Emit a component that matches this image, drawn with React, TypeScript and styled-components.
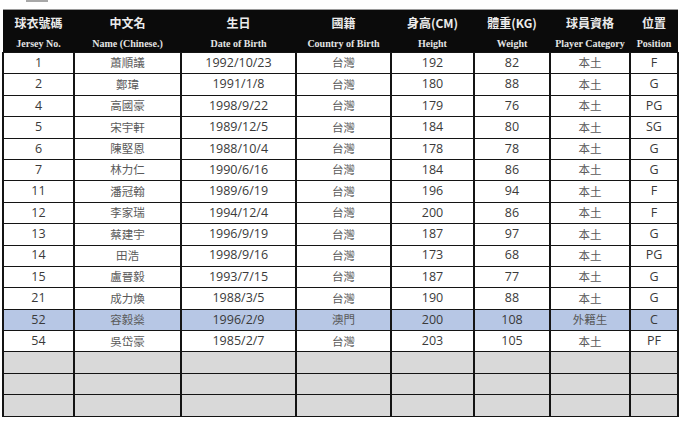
import React from 'react';
import styled, { createGlobalStyle } from 'styled-components';

const GlobalStyle = createGlobalStyle`
  body {
    margin: 0;
    background: #ffffff;
    font-family: "Open Sans", "Noto Sans CJK TC", sans-serif;
  }
`;

const Page = styled.div`
  width: 681px;
  height: 423px;
  overflow: hidden;
  background: #fff;
`;

const TopStrip = styled.div`
  height: 9px;
  padding-left: 26px;
`;

const Mark = styled.div`
  width: 22px;
  height: 2px;
  background: #a8a8a8;
`;

const Table = styled.table`
  margin-left: 2px;
  width: 675px;
  border-collapse: collapse;
  table-layout: fixed;
  border-top: 1px solid #9a9a9a;
`;

const HeadRow = styled.tr<{ $tall?: boolean }>`
  background: #0b0b0b;
  height: ${({ $tall }) => ($tall ? '25px' : '18px')};
`;

const HeadCn = styled.th`
  color: #ececec;
  font-family: "Noto Sans CJK TC", sans-serif;
  font-size: 12px;
  font-weight: 700;
  padding: 0;
  text-align: center;
`;

const HeadEn = styled.th`
  color: #e4e4e4;
  font-family: "Liberation Serif", "Times New Roman", serif;
  font-size: 10px;
  font-weight: 700;
  padding: 0;
  text-align: center;
  white-space: nowrap;
`;

const Row = styled.tr<{ $bg: string }>`
  background: ${({ $bg }) => $bg};
  height: 21.4px;
`;

const Cell = styled.td<{ $cjk?: boolean }>`
  border: 2px solid #141414;
  border-top-width: 1.5px;
  border-bottom-width: 1.5px;
  padding: 0;
  text-align: center;
  color: ${({ $cjk }) => ($cjk ? '#5a5a5a' : '#3a3a3a')};
  font-family: ${({ $cjk }) =>
    $cjk ? '"Noto Sans CJK TC", sans-serif' : '"Open Sans", "Noto Sans CJK TC", sans-serif'};
  font-size: ${({ $cjk }) => ($cjk ? '11.5px' : '12.5px')};
  line-height: 1;
`;

const widths = [71, 107, 115, 95, 83, 76, 80, 48];

const headers = [
  ['球衣號碼', 'Jersey No.'],
  ['中文名', 'Name (Chinese.)'],
  ['生日', 'Date of Birth'],
  ['國籍', 'Country of Birth'],
  ['身高(CM)', 'Height'],
  ['體重(KG)', 'Weight'],
  ['球員資格', 'Player Category'],
  ['位置', 'Position'],
];

const players = [
  ['1', '蕭順議', '1992/10/23', '台灣', '192', '82', '本土', 'F'],
  ['2', '鄭瑋', '1991/1/8', '台灣', '180', '88', '本土', 'G'],
  ['4', '高國豪', '1998/9/22', '台灣', '179', '76', '本土', 'PG'],
  ['5', '宋宇軒', '1989/12/5', '台灣', '184', '80', '本土', 'SG'],
  ['6', '陳堅恩', '1988/10/4', '台灣', '178', '78', '本土', 'G'],
  ['7', '林力仁', '1990/6/16', '台灣', '184', '86', '本土', 'G'],
  ['11', '潘冠翰', '1989/6/19', '台灣', '196', '94', '本土', 'F'],
  ['12', '李家瑞', '1994/12/4', '台灣', '200', '86', '本土', 'F'],
  ['13', '蔡建宇', '1996/9/19', '台灣', '187', '97', '本土', 'G'],
  ['14', '田浩', '1998/9/16', '台灣', '173', '68', '本土', 'PG'],
  ['15', '盧晉毅', '1993/7/15', '台灣', '187', '77', '本土', 'G'],
  ['21', '成力煥', '1988/3/5', '台灣', '190', '88', '本土', 'G'],
  ['52', '容毅燊', '1996/2/9', '澳門', '200', '108', '外籍生', 'C'],
  ['54', '吳岱豪', '1985/2/7', '台灣', '203', '105', '本土', 'PF'],
];

const cjkCols = [1, 3, 6];

export default function App() {
  return (
    <Page>
      <GlobalStyle />
      <TopStrip>
        <Mark />
      </TopStrip>
      <Table>
        <colgroup>
          {widths.map((w, i) => (
            <col key={i} style={{ width: w }} />
          ))}
        </colgroup>
        <thead>
          <HeadRow $tall>
            {headers.map(([cn]) => (
              <HeadCn key={cn}>{cn}</HeadCn>
            ))}
          </HeadRow>
          <HeadRow>
            {headers.map(([cn, en]) => (
              <HeadEn key={cn}>{en}</HeadEn>
            ))}
          </HeadRow>
        </thead>
        <tbody>
          {players.map((p) => (
            <Row key={p[0]} $bg={p[0] === '52' ? '#b7c7e5' : '#ffffff'}>
              {p.map((v, i) => (
                <Cell key={i} $cjk={cjkCols.includes(i)}>
                  {v}
                </Cell>
              ))}
            </Row>
          ))}
          {[0, 1, 2].map((r) => (
            <Row key={'e' + r} $bg="#d9d9d9">
              {widths.map((_, i) => (
                <Cell key={i} />
              ))}
            </Row>
          ))}
        </tbody>
      </Table>
    </Page>
  );
}
